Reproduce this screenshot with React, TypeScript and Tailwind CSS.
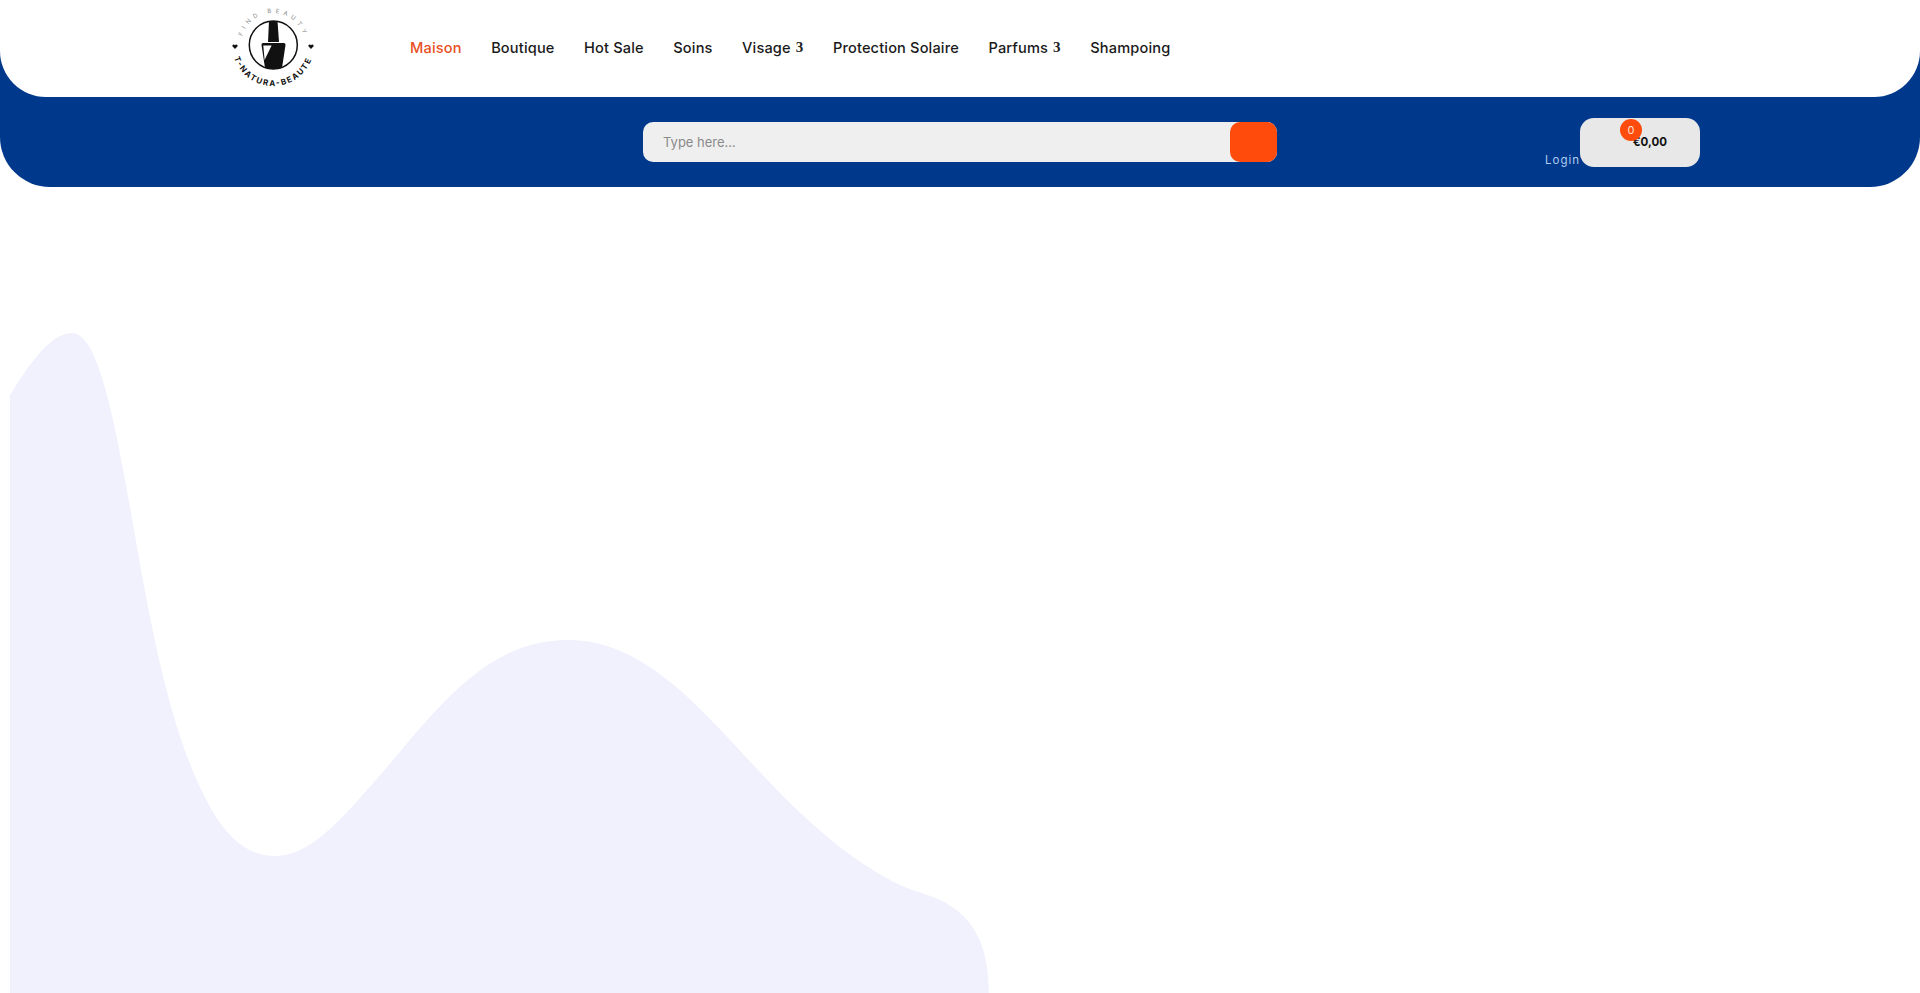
const navItems = [
  { label: "Maison", active: true },
  { label: "Boutique" },
  { label: "Hot Sale" },
  { label: "Soins" },
  { label: "Visage", arrow: true },
  { label: "Protection Solaire" },
  { label: "Parfums", arrow: true },
  { label: "Shampoing" },
];

function Logo() {
  return (
    <svg viewBox="0 0 95 90" className="h-[90px] w-[95px] shrink-0">
      <defs>
        <path id="arcTop" d="M 15.2 32.2 A 32 32 0 0 1 76.8 32.2" />
        <path id="arcBottom" d="M 7 53.7 A 41 41 0 0 0 85 53.7" />
      </defs>
      <text fill="#8a8a8a" fontSize="6" fontFamily="Inter, sans-serif">
        <textPath href="#arcTop" textLength="80" lengthAdjust="spacing">FIND BEAUTY</textPath>
      </text>
      <text fill="#111" fontSize="8" fontWeight="700" fontFamily="Inter, sans-serif">
        <textPath href="#arcBottom" textLength="100" lengthAdjust="spacing">T-NATURA-BEAUTE</textPath>
      </text>
      <circle cx="46.3" cy="41" r="24" fill="none" stroke="#111" strokeWidth="1.5" />
      <path d="M42 17 H50.5 L52 38 H41 Z" fill="#111" />
      <path d="M36 39 H57 Q58.5 39 58.5 41 L55 64 Q47 66 38 64 L34.5 41 Q34.5 39 36 39 Z" fill="#111" />
      <path d="M36.3 41.5 H44.6 L37.6 56 Z" fill="#fff" />
      <path d="M8 45 L5.4 42.2 Q5 40.4 6.6 40.4 Q7.6 40.4 8 41.2 Q8.4 40.4 9.4 40.4 Q11 40.4 10.6 42.2 Z" fill="#111" />
      <path d="M84 45 L81.4 42.2 Q81 40.4 82.6 40.4 Q83.6 40.4 84 41.2 Q84.4 40.4 85.4 40.4 Q87 40.4 86.6 42.2 Z" fill="#111" />
    </svg>
  );
}

export default function App() {
  return (
    <div className="min-h-[993px] overflow-hidden bg-white font-['Inter',sans-serif]">
      <header className="h-[187px] rounded-b-[50px] bg-[#00388c]">
        <div className="flex h-[97px] items-center rounded-b-[46px] bg-white pl-[227px]">
          <Logo />
          <nav className="ml-[88px] flex items-center gap-[29.5px] text-[14.6px] font-[450] tracking-[0.15px]">
            {navItems.map((item) => (
              <a key={item.label} className={`flex items-center gap-[5px] ${item.active ? "text-[#e8501f]" : "text-[#1a1a1a]"}`}>
                {item.label}
                {item.arrow && <span className="-mt-[2px] font-['Liberation_Serif',serif] text-[15px] leading-none font-bold text-[#222]">3</span>}
              </a>
            ))}
          </nav>
        </div>
        <div className="flex pl-[643px]">
          <div className="mt-[25px] flex h-[40px] w-[634px] items-center justify-between rounded-[10px] bg-[#efefef]">
            <span className="pt-[2px] pl-5 text-[13px] text-[#8a8a8a]">Type here...</span>
            <button type="button" className="h-[40px] w-[47px] rounded-[10px] bg-[#ff4c0d]" />
          </div>
          <span className="mt-[55px] ml-[268px] w-[35px] text-[11.5px] leading-[16px] tracking-[1px] text-[#b0ccf2]">Login</span>
          <div className="relative mt-[21px] flex h-[49px] w-[120px] items-center justify-end rounded-[14px] bg-[#e8e8e8] pr-[33px] text-[11.5px] font-bold text-[#111]">
            €0,00
            <span className="absolute top-[1px] left-[40px] flex h-[22px] w-[22px] items-center justify-center rounded-full bg-[#ff4c0d] text-[11px] font-normal text-[#ffe0d0]">0</span>
          </div>
        </div>
      </header>
      <main className="pt-[146px] pl-[10px]">
        <svg viewBox="0 0 979 660" className="block h-[660px] w-[979px]">
          <path
            d="M0 62 C14 40 38 0 62 0 C86 0 102 70 122 185 C140 290 160 400 198 470 C220 512 244 523 265 523 C300 523 330 488 372 440 C425 378 475 307 558 307 C645 307 705 395 775 465 C825 515 875 550 912 560 C950 572 979 595 979 660 L0 660 Z"
            fill="#f1f1fe"
          />
        </svg>
      </main>
    </div>
  );
}
